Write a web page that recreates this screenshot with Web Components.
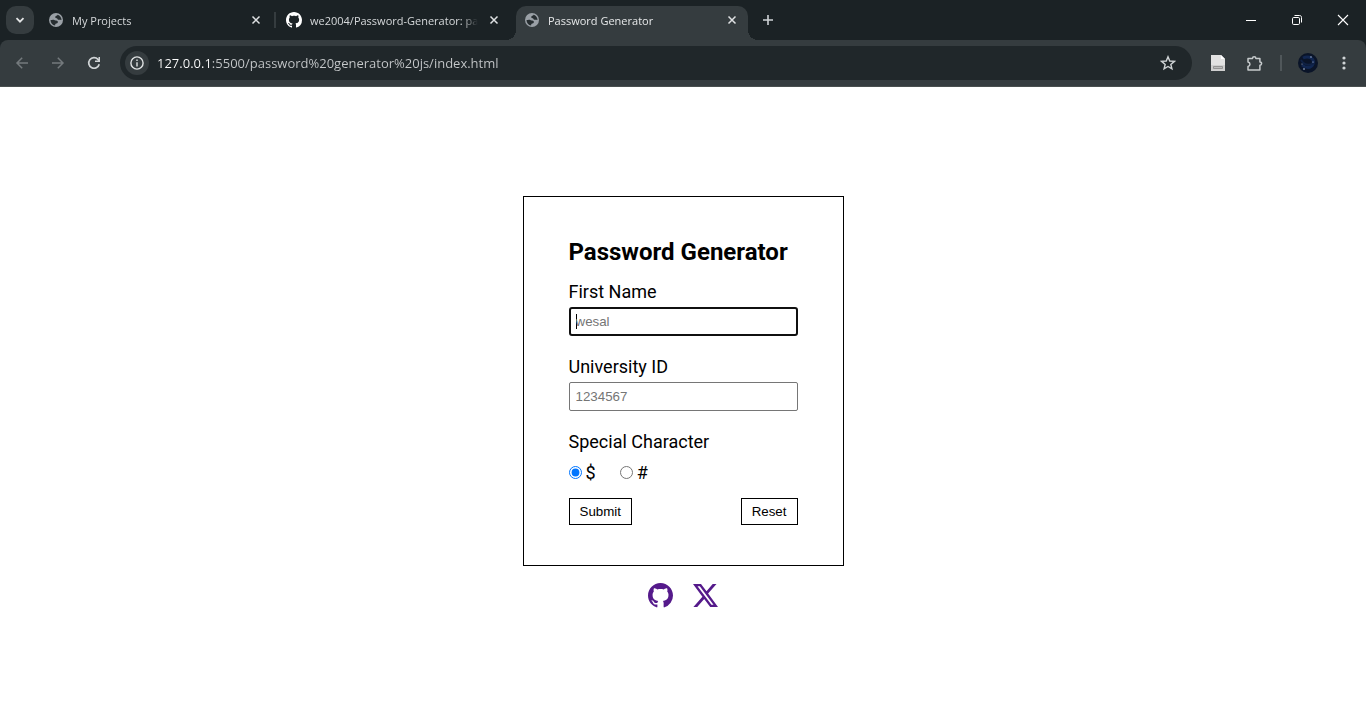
<!DOCTYPE html>
<html lang="en">
<head>
<meta charset="utf-8">
<title>Password Generator</title>
<style>
  html, body { height: 100%; }
  body { margin: 0; background: #fff; font-family: Roboto, sans-serif; }
</style>
</head>
<body>
<browser-window></browser-window>

<script>
const ICONS = {
  chevron: '<svg viewBox="0 0 16 16" width="16" height="16"><path d="M4.500 6.200 8 9.700l3.500-3.500" fill="none" stroke="#e3e5e6" stroke-width="1.800"/></svg>',
  globe: '<svg viewBox="0 0 16 16" width="16" height="16"><circle cx="8" cy="8" r="7" fill="#9aa0a6"/><path d="M9.600 2.700c-.3 1.200-2.300.8-2.400 2.200-.1 1.200 1.500.7 2 1.600.4.900.9 1.500 2.100 1.300.8-.1 1.300.3 2.200.2C13.500 5.500 12 3.400 9.600 2.700Z" fill="#272e31"/><path d="M2.500 8c0 2.900 2 5.200 4.600 5.500.1-1.100.2-1.700 1.300-1.900 1.300-.2 1.600-1.100 1.400-2-.3-1-1.400-.9-2.300-1.100C6.300 8.300 6 7.700 4.900 7.800 4 7.900 3.300 8.100 2.500 8Z" fill="#272e31"/></svg>',
  github: '<svg viewBox="0 0 16 16" width="16" height="16"><path fill="#fff" d="M8 0C3.580 0 0 3.580 0 8c0 3.540 2.290 6.530 5.470 7.590.4.070.55-.17.55-.38 0-.19-.01-.82-.01-1.490-2.010.37-2.530-.49-2.690-.94-.09-.23-.48-.94-.82-1.130-.28-.15-.68-.52-.01-.53.63-.01 1.080.58 1.230.82.72 1.210 1.870.87 2.330.66.07-.52.28-.87.51-1.070-1.780-.2-3.640-.89-3.640-3.950 0-.87.31-1.590.82-2.150-.08-.2-.36-1.020.08-2.120 0 0 .67-.21 2.200.82.64-.18 1.320-.27 2-.27s1.360.09 2 .27c1.530-1.040 2.200-.82 2.200-.82.44 1.100.16 1.920.08 2.120.51.56.82 1.270.82 2.150 0 3.070-1.870 3.750-3.650 3.950.29.25.54.73.54 1.480 0 1.070-.01 1.930-.01 2.200 0 .21.15.46.55.38A8 8 0 0 0 16 8c0-4.420-3.580-8-8-8Z"/></svg>',
  close: '<svg viewBox="0 0 16 16" width="16" height="16"><path d="m4.500 4.500 7 7m0-7-7 7" stroke="#dfe1e3" stroke-width="1.500"/></svg>',
  plus: '<svg viewBox="0 0 16 16" width="16" height="16"><path d="M8 3v10M3 8h10" stroke="#cfd3d6" stroke-width="1.600"/></svg>',
  minimize: '<svg viewBox="0 0 16 16" width="16" height="16"><path d="M3 8.500h10" stroke="#fff"/></svg>',
  restore: '<svg viewBox="0 0 16 16" width="16" height="16" fill="none" stroke="#fff"><rect x="3.500" y="5.500" width="7" height="7" rx="1.200"/><path d="M5.500 3.500h5c1.300 0 2 .7 2 2v5"/></svg>',
  winclose: '<svg viewBox="0 0 16 16" width="16" height="16"><path d="m3 3 10 10m0-10L3 13" stroke="#fff" stroke-width="1.100"/></svg>',
  back: '<svg viewBox="0 0 16 16" width="16" height="16"><path d="M14 8H3m5.200-5.200L3 8l5.200 5.200" fill="none" stroke="#747a7d" stroke-width="1.500"/></svg>',
  forward: '<svg viewBox="0 0 16 16" width="16" height="16"><path d="M2 8h11M7.800 2.800 13 8l-5.200 5.200" fill="none" stroke="#747a7d" stroke-width="1.500"/></svg>',
  reload: '<svg viewBox="0 0 16 16" width="16" height="16"><path d="M13.200 9.200A5.300 5.300 0 1 1 12 4.400l1.400 1.500" fill="none" stroke="#d0d4d6" stroke-width="1.700"/><path d="M14 2v5H9V5.500h3.500V2Z" fill="#d0d4d6"/></svg>',
  info: '<svg viewBox="0 0 16 16" width="16" height="16"><circle cx="8" cy="8" r="6.100" fill="none" stroke="#dfe2e3" stroke-width="1.400"/><path d="M7.300 7.200h1.400v4.200H7.300zM7.300 4.600h1.400V6H7.300z" fill="#dfe2e3"/></svg>',
  star: '<svg viewBox="0 0 16 16" width="16" height="16"><path d="m8 1.800 1.750 4.250 4.600.35-3.520 2.980 1.100 4.470L8 11.450l-3.930 2.400 1.100-4.470L1.650 6.400l4.600-.35Z" fill="none" stroke="#cfd3d5" stroke-width="1.400"/></svg>',
  page: '<svg viewBox="0 0 16 16" width="16" height="16"><path d="M1 0h10l4 4v12H1Z" fill="#e2e2e2"/><path d="m11 0 4 4h-4Z" fill="#fff"/><path d="M1 10h14v6H1Z" fill="#cfcfcf"/><path d="M3.500 11.500h9v2h-9Z" fill="#bcbcbc" stroke="#888" stroke-width=".8"/></svg>',
  puzzle: '<svg viewBox="0 0 18 18" width="18" height="18"><path d="M3 4.500h4.500a1.700 1.700 0 0 1 3.400 0h4v3.400a1.700 1.700 0 0 1 0 3.400v4.700H3v-3.600c2.600-.6 2.600-3.700 0-4.300Z" fill="none" stroke="#c6cacc" stroke-width="1.500" stroke-linejoin="round"/></svg>',
  avatar: '<svg viewBox="0 0 20 20" width="20" height="20"><circle cx="10" cy="10" r="10" fill="#0a1428"/><path d="M5 5c6-3 12 1 10 6s-8 4-11 1" fill="none" stroke="#112650" stroke-width="3"/><path d="M3 7c3 5 8 6 13 3" fill="none" stroke="#0f2144" stroke-width="2"/><g fill="#bfd1ef"><circle cx="13" cy="4" r=".7"/><circle cx="4" cy="11" r=".5"/><circle cx="6" cy="16" r=".8"/><circle cx="15" cy="9" r=".6"/></g></svg>',
  dots: '<svg viewBox="0 0 16 16" width="16" height="16" fill="#d0d4d6"><circle cx="8" cy="3" r="1.600"/><circle cx="8" cy="8" r="1.600"/><circle cx="8" cy="13" r="1.600"/></svg>'
};

/* Base class: renders the subclass's view() into an open shadow root. */
class View extends HTMLElement {
  connectedCallback() {
    if (this.shadowRoot) return;
    this.attachShadow({ mode: 'open' }).innerHTML = this.view();
  }
}

customElements.define('icon-button', class extends View {
  view() {
    return `<style>
      :host { display: flex; flex: none; width: 28px; height: 28px; }
      button { display: flex; align-items: center; justify-content: center; width: 100%; height: 100%;
        margin: 0; padding: 0; border: 0; border-radius: var(--radius, 14px); background: var(--fill, transparent); }
      svg { display: block; flex: none; }
    </style><button type="button" aria-label="${this.getAttribute('label')}">${ICONS[this.getAttribute('icon')]}</button>`;
  }
});

customElements.define('browser-tab', class extends View {
  view() {
    return `<style>
      :host { position: relative; display: flex; align-items: center; box-sizing: border-box;
        flex: 0 1 232px; min-width: 0; height: 34px; padding: 0 8px 6px; gap: 8px; border-radius: 10px 10px 0 0;
        font: 11px/16px "Open Sans", sans-serif; color: #d5d8da; }
      :host([active]) { background: #353c3f; color: #e6e8e9; }
      :host([active])::before, :host([active])::after { content: ""; position: absolute; bottom: 0; width: 10px; height: 10px; }
      :host([active])::before { left: -10px; background: radial-gradient(circle at 0 0, transparent 10px, #353c3f 10px); }
      :host([active])::after { right: -10px; background: radial-gradient(circle at 100% 0, transparent 10px, #353c3f 10px); }
      svg { display: block; flex: none; }
      span { flex: 1; min-width: 0; padding-top: 2px; overflow: hidden; white-space: nowrap;
        -webkit-mask-image: linear-gradient(to left, transparent, #000 16px); mask-image: linear-gradient(to left, transparent, #000 16px); }
      icon-button { width: 16px; height: 16px; }
    </style>${ICONS[this.getAttribute('icon')]}<span><slot></slot></span><icon-button icon="close" label="Close tab"></icon-button>`;
  }
});

customElements.define('tab-strip', class extends View {
  view() {
    return `<style>
      :host { display: flex; height: 40px; background: #1b2225; }
      .search { margin: 6px 6px 0; --fill: #353c3f; --radius: 10px; }
      .tabs { display: flex; flex: 1; min-width: 0; padding-top: 6px; }
      i { flex: none; width: 2px; height: 16px; margin: 6px 2px 0; background: #353c3f; }
      i.blank { background: transparent; }
      .new { margin: 0 6px; }
      .window { display: flex; }
      .window icon-button { width: 46px; height: 40px; --radius: 0; }
    </style>
    <icon-button class="search" icon="chevron" label="Search tabs"></icon-button>
    <div class="tabs">
      <browser-tab icon="globe">My Projects</browser-tab><i></i>
      <browser-tab icon="github">we2004/Password-Generator: password</browser-tab><i class="blank"></i>
      <browser-tab icon="globe" active>Password Generator</browser-tab>
      <icon-button class="new" icon="plus" label="New tab"></icon-button>
    </div>
    <div class="window">
      <icon-button icon="minimize" label="Minimize"></icon-button>
      <icon-button icon="restore" label="Restore"></icon-button>
      <icon-button icon="winclose" label="Close"></icon-button>
    </div>`;
  }
});

customElements.define('address-bar', class extends View {
  view() {
    return `<style>
      :host { display: flex; align-items: center; flex: 1; min-width: 0; height: 34px; box-sizing: border-box;
        padding: 0 10px 0 5px; gap: 8px; border-radius: 17px; background: #20272a; }
      .info { width: 24px; height: 24px; --fill: #353c3f; }
      /* The host part of the address is brighter than the path. */
      input { flex: 1; min-width: 0; margin: 0; padding: 0; border: 0; outline: 0; font: 13px/20px "Open Sans", sans-serif;
        color: #d3d6d7; -webkit-text-fill-color: transparent;
        background: linear-gradient(to right, #fff 52px, #c6c9cb 52px);
        -webkit-background-clip: text; background-clip: text; }
    </style>
    <icon-button class="info" icon="info" label="View site information"></icon-button>
    <input type="text" aria-label="Address" value="127.0.0.1:5500/password%20generator%20js/index.html" spellcheck="false">
    <icon-button icon="star" label="Bookmark this tab"></icon-button>`;
  }
});

customElements.define('browser-toolbar', class extends View {
  view() {
    return `<style>
      :host { display: block; background: #1b2225; }
      .bar { display: flex; align-items: center; gap: 8px; padding: 6px 8px; background: #353c3f;
        border-bottom: 1px solid #494f4f; border-radius: 8px 8px 0 0; }
      address-bar { margin: 0 4px; }
      i { width: 2px; height: 16px; margin: 0 4px; background: #50575a; }
    </style>
    <div class="bar">
      <icon-button icon="back" label="Back"></icon-button>
      <icon-button icon="forward" label="Forward"></icon-button>
      <icon-button icon="reload" label="Reload"></icon-button>
      <address-bar></address-bar>
      <icon-button icon="page" label="Extension"></icon-button>
      <icon-button icon="puzzle" label="Extensions"></icon-button>
      <i></i>
      <icon-button icon="avatar" label="Profile"></icon-button>
      <icon-button icon="dots" label="Menu"></icon-button>
    </div>`;
  }
});

customElements.define('text-field', class extends View {
  view() {
    return `<style>
      :host { display: flex; flex-direction: column; gap: 4px; margin-bottom: 20px; }
      label { font-size: 18px; line-height: 22px; }
      input { box-sizing: border-box; width: 100%; height: 29px; margin: 0; padding: 0 6px; border: 1px solid #767676;
        border-radius: 2px; background: #fff; font-family: "Liberation Sans", Arial, sans-serif; color: #000; }
      input::placeholder { color: #757575; }
      /* The field being edited: heavy ring, and a text cursor at its start. */
      :host([current]) input { padding: 0 5px; border: 2px solid #101010; border-radius: 3px; outline: 0; caret-color: transparent;
        background: linear-gradient(#000, #000) 5px center / 1px 15px no-repeat #fff; }
    </style>
    <label for="box"><slot></slot></label>
    <input id="box" type="text" placeholder="${this.getAttribute('placeholder')}">`;
  }
});

customElements.define('character-choice', class extends View {
  view() {
    return `<style>
      :host { display: block; margin-bottom: 14px; font-size: 18px; line-height: 22px; }
      fieldset { margin: 0; padding: 0; border: 0; }
      legend { padding: 0; margin-bottom: 9px; }
      .row { display: flex; gap: 24px; }
      label { display: flex; align-items: center; gap: 4px; }
      input { width: 13px; height: 13px; margin: 0; }
    </style>
    <fieldset><legend>Special Character</legend>
      <div class="row">
        <label><input type="radio" name="char" value="$" checked>$</label>
        <label><input type="radio" name="char" value="#">#</label>
      </div>
    </fieldset>`;
  }
});

customElements.define('form-button', class extends View {
  view() {
    return `<style>
      :host { display: block; }
      button { display: block; margin: 0; padding: 5px 10px; border: 1px solid #000; background: #fff; color: #000;
        font-family: "Liberation Sans", Arial, sans-serif; line-height: 15px; }
    </style><button type="button"><slot></slot></button>`;
  }
});

customElements.define('password-form', class extends View {
  view() {
    return `<style>
      :host { display: block; box-sizing: border-box; width: 321px; max-width: 100%; padding: 41px 45px 40px; border: 1px solid #000; }
      h2 { margin: 0 0 15px; font-size: 24px; line-height: 28px; font-weight: 700; white-space: nowrap; }
      .actions { display: flex; justify-content: space-between; }
    </style>
    <h2>Password Generator</h2>
    <text-field placeholder="wesal" current>First Name</text-field>
    <text-field placeholder="1234567">University ID</text-field>
    <character-choice></character-choice>
    <div class="actions"><form-button>Submit</form-button><form-button>Reset</form-button></div>`;
  }
});

customElements.define('social-links', class extends View {
  view() {
    const mark = ICONS.github.replace('#fff', 'currentColor').replace('width="16" height="16"', 'width="25" height="25"');
    return `<style>
      :host { display: flex; gap: 20px; }
      a { display: block; color: #551a8b; }
      svg { display: block; }
    </style>
    <a href="#github" aria-label="GitHub">${mark}</a>
    <a href="#x" aria-label="X"><svg viewBox="0 0 25 25" width="25" height="25" fill="currentColor"><path d="M19.700 1h3.800l-8.400 9.600L25 24h-7.800l-6-7.900-7 7.900H.4l9-10.300L0 1h8l5.500 7.200Zm-1.300 20.700h2.100L6.800 3.200H4.500Z"/></svg></a>`;
  }
});

customElements.define('browser-window', class extends View {
  view() {
    return `<style>
      :host { display: flex; flex-direction: column; min-height: 100%; }
      main { display: flex; flex: 1; flex-direction: column; align-items: center; justify-content: center; gap: 17px; color: #000; }
    </style>
    <header><tab-strip></tab-strip><browser-toolbar></browser-toolbar></header>
    <main><password-form></password-form><social-links></social-links></main>`;
  }
});
</script>
</body>
</html>
